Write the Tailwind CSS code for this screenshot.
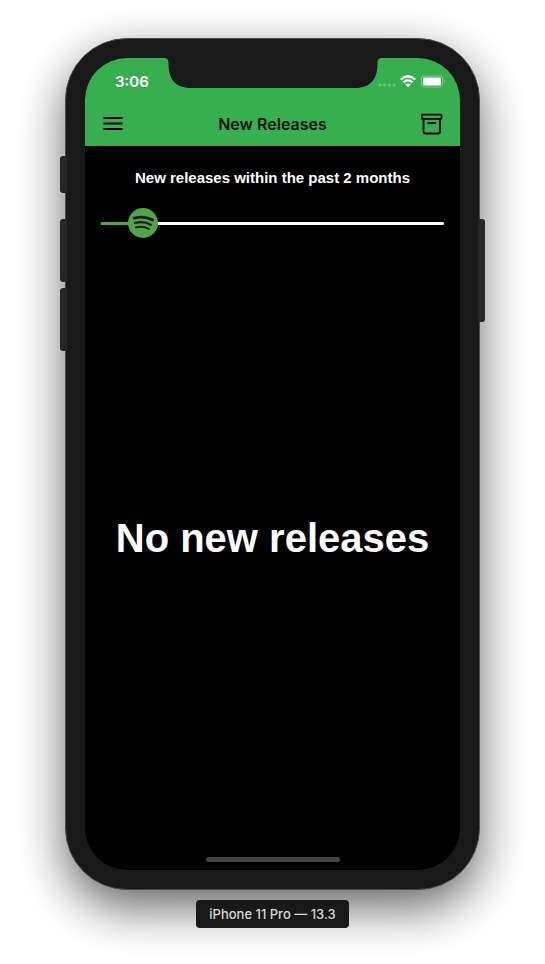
<!DOCTYPE html>
<html lang="en">
<head>
<meta charset="utf-8">
<meta name="viewport" content="width=device-width, initial-scale=1">
<title>New Releases</title>
<script src="https://cdn.jsdelivr.net/npm/@tailwindcss/browser@4"></script>
</head>
<body class="bg-white font-['Inter','Liberation_Sans',sans-serif]">
<div class="flex min-h-screen flex-col items-center px-[65px] pt-[38px] pb-9">
  <div class="relative flex w-full max-w-[415px] grow flex-col rounded-[62px] border border-[#4c4c4c] bg-[#191919] p-[19px] shadow-[0_18px_48px_rgba(0,0,0,0.6)]">
    <span class="absolute top-[117px] -left-[6px] h-[37px] w-[7px] rounded-l-[3px] bg-[#262626]"></span>
    <span class="absolute top-[180px] -left-[6px] h-[63px] w-[7px] rounded-l-[3px] bg-[#262626]"></span>
    <span class="absolute top-[249px] -left-[6px] h-[63px] w-[7px] rounded-l-[3px] bg-[#262626]"></span>
    <span class="absolute top-[180px] -right-[6px] h-[103px] w-[7px] rounded-r-[3px] bg-[#262626]"></span>

    <div class="relative flex grow flex-col overflow-hidden rounded-[42px] bg-black">
      <svg class="absolute top-0 left-1/2 h-[30px] w-[219px] -translate-x-1/2" viewBox="0 0 219 30" fill="#191919" aria-hidden="true"><path d="M0 0C4 0 5 1.500 5 6C5 21 12 30 27 30H192C207 30 214 21 214 6C214 1.500 215 0 219 0Z"/></svg>

      <header class="bg-[#37af51]">
        <div class="flex h-11 items-center justify-between pt-[3px] pr-[14px] pl-[30px]">
          <span class="text-[15px] leading-5 font-semibold text-white">3:06</span>
          <div class="flex items-center gap-1 text-white">
            <svg class="h-[13px] w-[18px]" viewBox="0 0 18 13" fill="currentColor" opacity=".25" aria-hidden="true"><circle cx="2" cy="10" r="1.600"/><circle cx="6.700" cy="10" r="1.600"/><circle cx="11.400" cy="10" r="1.600"/><circle cx="16.100" cy="10" r="1.600"/></svg>
            <svg class="h-[13px] w-4" viewBox="0 0 16 13" fill="none" stroke="currentColor" stroke-width="2.300" aria-hidden="true"><path d="M.9 4.500Q8-2 15.100 4.500M3.400 7.400Q8 3.300 12.600 7.400"/><path d="M5.500 9.600Q8 7.500 10.500 9.600L8 12.200Z" fill="currentColor" stroke="none"/></svg>
            <svg class="h-[13px] w-[26px]" viewBox="0 0 26 13" aria-hidden="true"><rect x="1.500" y="1" width="21" height="11" rx="3" fill="none" stroke="currentColor" opacity=".35"/><rect x="3" y="2.500" width="18" height="8" rx="1.500" fill="currentColor"/><path d="M24 4.500q2 2 0 4z" fill="currentColor" opacity=".4"/></svg>
          </div>
        </div>
        <div class="flex h-11 items-center justify-between px-4">
          <button type="button" aria-label="Menu" class="flex size-6 items-center justify-center text-black">
            <svg class="h-4 w-5" viewBox="0 0 20 16" fill="none" stroke="currentColor" stroke-width="2" aria-hidden="true"><path d="M.5 2h19M.5 7.500h19M.5 13h19"/></svg>
          </button>
          <h1 class="text-[16px] leading-6 font-semibold text-[#06140a]">New Releases</h1>
          <button type="button" aria-label="Archive" class="flex size-6 items-center justify-center text-black">
            <svg class="h-[22px] w-[22px]" viewBox="0 0 22 22" fill="none" stroke="currentColor" stroke-width="1.800" stroke-linecap="round" stroke-linejoin="round" aria-hidden="true"><rect x=".9" y="1.600" width="19.600" height="4.300" rx="1"/><path d="M2.500 6v12.500q0 2 2 2h12.500q2 0 2-2V6M7.300 10h7"/></svg>
          </button>
        </div>
      </header>

      <main class="flex grow flex-col font-['Liberation_Sans',Arial,sans-serif] text-white">
        <div class="px-4 pt-[22px]">
          <label for="months" class="block text-center text-[15px] leading-5 font-bold">New releases within the past 2 months</label>
          <div class="relative mt-5 flex h-[30px] items-center">
            <div class="h-[3px] w-full overflow-hidden rounded-full bg-white"><div class="h-full w-[12%] bg-[#50a44b]"></div></div>
            <svg class="absolute left-[27px] size-[30px]" viewBox="0 0 30 30" aria-hidden="true"><circle cx="15" cy="15" r="15" fill="#50a44b"/><g fill="none" stroke="#1d1d1b" stroke-linecap="round"><path d="M6.200 10.200Q16 7.400 24.600 12.100" stroke-width="2.800"/><path d="M7 15Q15.500 12.600 22.800 16.700" stroke-width="2.300"/><path d="M7.700 19.400Q15 17.500 21 20.900" stroke-width="1.900"/></g></svg>
            <input id="months" type="range" min="0" max="24" value="2" class="absolute inset-0 h-full w-full cursor-pointer opacity-0">
          </div>
        </div>
        <div class="flex grow items-center justify-center px-4 pb-8">
          <p class="text-center text-[40px] leading-[48px] font-bold">No new releases</p>
        </div>
      </main>

      <span class="absolute bottom-2 left-1/2 h-[5px] w-[134px] -translate-x-1/2 rounded-full bg-[#454545]"></span>
    </div>
  </div>
  <p class="relative mt-[10px] rounded-[4px] bg-[#191919] px-[13px] py-1 text-[13px] leading-5 font-medium text-[#d8d8d8]">iPhone 11 Pro — 13.3</p>
</div>
</body>
</html>
